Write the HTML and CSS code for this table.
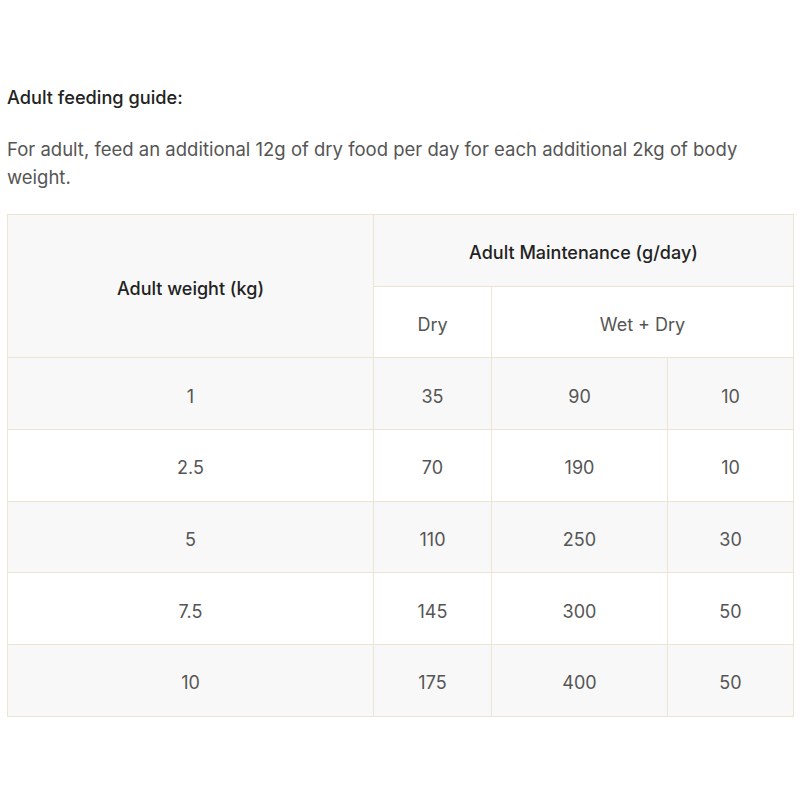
FILE: index.html
```html
<!DOCTYPE html>
<html>
<head>
<meta charset="utf-8">
<link rel="stylesheet" href="styles.css">
</head>
<body>
<div class="page">
  <h3 class="title">Adult feeding guide:</h3>
  <p class="intro">For adult, feed an additional 12g of dry food per day for each additional 2kg of body weight.</p>
  <table class="guide">
    <colgroup>
      <col class="c1"><col class="c2"><col class="c3"><col class="c4">
    </colgroup>
    <thead>
      <tr class="shade">
        <th rowspan="2" class="shade">Adult weight (kg)</th>
        <th colspan="3">Adult Maintenance (g/day)</th>
      </tr>
      <tr class="plain">
        <td>Dry</td>
        <td colspan="2">Wet + Dry</td>
      </tr>
    </thead>
    <tbody>
      <tr class="shade"><td>1</td><td>35</td><td>90</td><td>10</td></tr>
      <tr class="plain"><td>2.5</td><td>70</td><td>190</td><td>10</td></tr>
      <tr class="shade"><td>5</td><td>110</td><td>250</td><td>30</td></tr>
      <tr class="plain"><td>7.5</td><td>145</td><td>300</td><td>50</td></tr>
      <tr class="shade"><td>10</td><td>175</td><td>400</td><td>50</td></tr>
    </tbody>
  </table>
</div>
</body>
</html>
```

FILE: styles.css
```css
html, body {
  margin: 0;
  padding: 0;
  background: #ffffff;
}
.page {
  padding: 85px 7px 0 7px;
  width: 786px;
  font-family: Inter, "Noto Sans", sans-serif;
}
.title {
  margin: 0;
  font-size: 18.2px;
  line-height: 24px;
  font-weight: 500;
  color: #222222;
}
.intro {
  margin: 26px 0 0 0;
  font-size: 18.5px;
  line-height: 28px;
  color: #555555;
}
.guide {
  margin-top: 23px;
  width: 786px;
  border-collapse: collapse;
  table-layout: fixed;
  font-size: 18px;
}
.c1 { width: 366px; }
.c2 { width: 118px; }
.c3 { width: 176px; }
.c4 { width: 126px; }
.guide tr { height: 71.7px; }
.guide th, .guide td {
  border: 1px solid #ede5d3;
  text-align: center;
  vertical-align: middle;
  padding: 5px 0 0 0;
}
.guide th {
  font-weight: 500;
  color: #222222;
}
.guide td {
  color: #555555;
  font-weight: 400;
}
.shade { background: #f8f8f8; }
.plain { background: #ffffff; }
```
